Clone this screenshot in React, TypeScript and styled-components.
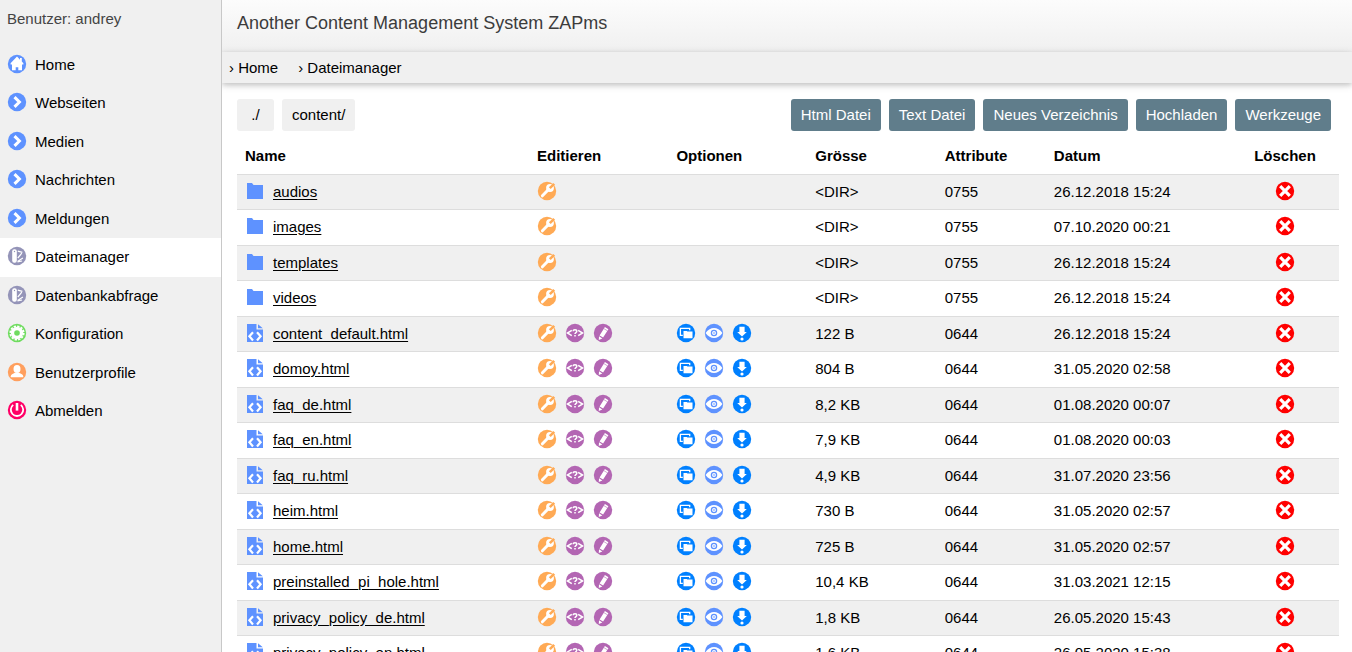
import React from "react";
import styled, { createGlobalStyle } from "styled-components";

const GlobalStyle = createGlobalStyle`
  *, *::before, *::after { box-sizing: border-box; }
  html { scrollbar-width: none; }
  body {
    margin: 0;
    background: #fff;
    color: #000;
    font-family: "Liberation Sans", Arial, sans-serif;
    font-size: 15px;
    line-height: 1.5;
  }
  a { color: inherit; }
  button { font: inherit; cursor: pointer; }
`;

const Page = styled.div`
  display: grid;
  grid-template-columns: 222px minmax(0, 1fr);
  min-height: 100vh;
`;

const Sidebar = styled.aside`
  position: relative;
  z-index: 1;
  background: #f0f0f0;
  border-right: 1px solid #c8c8c8;
`;

const UserLine = styled.div`
  padding: 8px 7px 15px;
  color: #444;
`;

const NavList = styled.ul`
  list-style: none;
  margin: 0;
  padding: 0;
`;

const NavLink = styled.a<{ $active?: boolean }>`
  display: flex;
  align-items: center;
  gap: 8px;
  padding: 8px 7px;
  text-decoration: none;
  background: ${(p) => (p.$active ? "#fff" : "transparent")};
`;

const Icon = styled.svg`
  display: block;
  flex: none;
  width: 20px;
  height: 20px;
  margin-bottom: 2px;
`;

const Content = styled.div`
  display: flex;
  flex-direction: column;
`;

const Header = styled.header`
  height: 52px;
  padding: 0 15px;
  background: linear-gradient(#fcfcfc, #f0f0f0);
`;

const Title = styled.h1`
  margin: 0;
  font-size: 18px;
  line-height: 46px;
  font-weight: 400;
  color: #3c3c3c;
`;

const Breadcrumb = styled.nav`
  display: flex;
  gap: 20px;
  padding: 4px 7px;
  line-height: 23px;
  background: #f0f0f0;
  box-shadow: 0 2px 5px rgba(0, 0, 0, 0.16), 0 2px 10px rgba(0, 0, 0, 0.12);

  a { text-decoration: none; }
`;

const Main = styled.main`
  padding: 16px 13px 16px 15px;
`;

const Toolbar = styled.div`
  display: flex;
  gap: 8px;
  padding-right: 8px;
  margin-bottom: 8px;
`;

const Spacer = styled.div`
  flex: 1;
`;

const ToolButton = styled.button<{ $primary?: boolean }>`
  min-width: 37px;
  height: 32px;
  padding: 0 10px;
  border: 0;
  border-radius: 3px;
  white-space: nowrap;
  color: ${(p) => (p.$primary ? "#fff" : "#000")};
  background: ${(p) => (p.$primary ? "#607d8b" : "#f0f0f0")};
`;

const Table = styled.table`
  width: 100%;
  table-layout: fixed;
  border-collapse: collapse;
  border-spacing: 0;

  th, td {
    padding: 6px 8px;
    text-align: left;
    vertical-align: middle;
    white-space: nowrap;
  }
  th:last-child, td:last-child { text-align: center; }
  tr { border-bottom: 1px solid #ddd; }
  tbody tr:nth-child(odd) { background: #f0f0f0; }
`;

const Col = styled.col<{ $width: string }>`
  width: ${(p) => p.$width};
`;

const NameCell = styled.div`
  display: flex;
  align-items: center;
  gap: 8px;
`;

const FileLink = styled.a`
  text-decoration: underline;
  text-underline-offset: 2px;
`;

const Actions = styled.div<{ $center?: boolean }>`
  display: flex;
  gap: 8px;
  justify-content: ${(p) => (p.$center ? "center" : "flex-start")};
`;

const IconButton = styled.button`
  display: block;
  padding: 0;
  border: 0;
  background: none;
`;

type IconName =
  | "home" | "chevron" | "knife" | "gear" | "user" | "power"
  | "wrench" | "code" | "pencil" | "copy" | "eye" | "download" | "remove";

const discs: Record<IconName, string> = {
  home: "#5e92ff",
  chevron: "#5e92ff",
  knife: "#9494b8",
  gear: "#6fdc5f",
  user: "#ff9f5e",
  power: "#ff0066",
  wrench: "#ffaa55",
  code: "#b366b3",
  pencil: "#b366b3",
  copy: "#0080ff",
  eye: "#5e92ff",
  download: "#0080ff",
  remove: "#ff0000",
};

const glyphs: Record<IconName, React.ReactNode> = {
  home: <path fill="#fff" d="M10 2.6 3.6 9.2v1.400H5V16.300h3.700v-3.100h2.600v3.100H15v-5.700h1.400V9.200l-1.600-1.600V4h-1.800v1.700z" />,
  chevron: <path fill="none" stroke="#fff" strokeWidth="3" d="m7.500 5.100 4.900 4.900-4.900 4.900" />,
  knife: (
    <>
      <rect x="5.200" y="3.200" width="4.600" height="13.600" rx="2" fill="#fff" />
      <circle cx="7.500" cy="5.500" r=".7" fill="#9494b8" />
      <path fill="none" stroke="#fff" strokeWidth="1.200" d="m10.800 5.200 4.600 1.200M14.800 7.200l-4 4.800M10.500 15.400l5.400-3.300M10.500 15.800l4.600-.8" />
    </>
  ),
  gear: (
    <>
      <circle cx="10" cy="10" r="6.200" fill="#fff" />
      <circle cx="10" cy="10" r="6.800" fill="none" stroke="#fff" strokeWidth="1.600" strokeDasharray="2.300 1.260" />
      <circle cx="10" cy="10" r="2.800" fill="#6fdc5f" />
    </>
  ),
  user: (
    <>
      <ellipse cx="10" cy="6.900" rx="3.500" ry="4" fill="#fff" />
      <path fill="#fff" d="M3.800 15.300v-1.100c0-1.500 2.200-2.500 4.200-3.400h4c2 .9 4.200 1.900 4.200 3.400v1.100z" />
    </>
  ),
  power: (
    <>
      <path fill="none" stroke="#fff" strokeWidth="1.800" d="M6.200 4.900a6.200 6.200 0 1 0 7.600 0" />
      <path stroke="#fff" strokeWidth="2.600" d="M10 3v7.600" />
    </>
  ),
  wrench: (
    <>
      <path stroke="#fff" strokeWidth="3" strokeLinecap="round" d="m5.400 14.800 6.100-6.300" />
      <circle cx="13" cy="7" r="3.900" fill="#fff" />
      <path stroke="#ffaa55" strokeWidth="2.600" d="m12.800 7.200 4.400-4.400" />
    </>
  ),
  code: (
    <>
      <path fill="none" stroke="#fff" strokeWidth="1.500" d="M6.800 7.400 2.400 10l4.400 2.600M13.200 7.400l4.400 2.600-4.400 2.600" />
      <path fill="none" stroke="#fff" strokeWidth="1.500" d="M8.200 8.300c0-2.200 3.600-2.200 3.600 0 0 1.300-1.800 1.400-1.800 2.700M10 12v1.500" />
    </>
  ),
  pencil: (
    <>
      <path fill="#fff" d="m11.900 4 3.500 2.200-5.300 8.400-3.500-2.200zM6 13.300l3.300 2.100-3.500 1.700z" />
      <path stroke="#b366b3" strokeWidth=".6" d="m10.900 5.600 3.500 2.200" />
    </>
  ),
  copy: (
    <>
      <path fill="none" stroke="#fff" strokeWidth="1.300" d="M6.800 12.300H4.400V5.400h9.300v1.900" />
      <path fill="#fff" d="M7.500 8h3.200l.7.500h5.100v6.800h-9z" />
    </>
  ),
  eye: (
    <>
      <path fill="#fff" d="M1.500 10C4 6.500 7 4.900 10 4.900s6 1.600 8.500 5.100c-2.500 3.500-5.500 5.100-8.500 5.100S4 13.500 1.500 10z" />
      <circle cx="10" cy="10" r="2.600" fill="#fff" stroke="#5e92ff" strokeWidth="1.300" />
      <circle cx="10" cy="10" r=".8" fill="#5e92ff" />
    </>
  ),
  download: (
    <>
      <path fill="#fff" d="M7.400 3.800h5.200V9h2.200L10 13.600 5.200 9h2.200z" />
      <circle cx="10" cy="16" r="1.600" fill="#fff" />
    </>
  ),
  remove: <path fill="none" stroke="#fff" strokeWidth="3.200" d="m5.200 5.200 9.600 9.600m0-9.600-9.600 9.600" />,
};

function Glyph({ name }: { name: IconName }) {
  return (
    <Icon viewBox="0 0 20 20" aria-hidden="true">
      <circle cx="10" cy="10" r="9.200" fill={discs[name]} />
      {glyphs[name]}
    </Icon>
  );
}

function Folder() {
  return (
    <Icon viewBox="0 0 20 20" aria-hidden="true">
      <path fill="#5e92ff" d="M2 2h5l1.500 2H18v14H2z" />
    </Icon>
  );
}

function HtmlFile() {
  return (
    <Icon viewBox="0 0 20 20" aria-hidden="true">
      <path fill="#5e92ff" d="M2 1h9.500v5.500H18V19H2zM13 1.200l4.800 4H13z" />
      <path fill="none" stroke="#fff" strokeWidth="2.200" d="m8 9.200-3.600 4.100L8 17.400M12 9.200l3.600 4.100-3.600 4.100" />
    </Icon>
  );
}

function Action({ name, label }: { name: IconName; label: string }) {
  return (
    <IconButton type="button" aria-label={label} title={label}>
      <Glyph name={name} />
    </IconButton>
  );
}

const navigation: { label: string; icon: IconName; active?: boolean }[] = [
  { label: "Home", icon: "home" },
  { label: "Webseiten", icon: "chevron" },
  { label: "Medien", icon: "chevron" },
  { label: "Nachrichten", icon: "chevron" },
  { label: "Meldungen", icon: "chevron" },
  { label: "Dateimanager", icon: "knife", active: true },
  { label: "Datenbankabfrage", icon: "knife" },
  { label: "Konfiguration", icon: "gear" },
  { label: "Benutzerprofile", icon: "user" },
  { label: "Abmelden", icon: "power" },
];

const paths = ["./", "content/"];
const tools = ["Html Datei", "Text Datei", "Neues Verzeichnis", "Hochladen", "Werkzeuge"];
const columns = [
  { label: "Name", width: "26.5%" },
  { label: "Editieren", width: "12.65%" },
  { label: "Optionen", width: "12.6%" },
  { label: "Grösse", width: "11.75%" },
  { label: "Attribute", width: "9.9%" },
  { label: "Datum", width: "16.8%" },
  { label: "Löschen", width: "9.8%" },
];

// name, size, attributes, date
const entries = [
  ["audios", "<DIR>", "0755", "26.12.2018 15:24"],
  ["images", "<DIR>", "0755", "07.10.2020 00:21"],
  ["templates", "<DIR>", "0755", "26.12.2018 15:24"],
  ["videos", "<DIR>", "0755", "26.12.2018 15:24"],
  ["content_default.html", "122 B", "0644", "26.12.2018 15:24"],
  ["domoy.html", "804 B", "0644", "31.05.2020 02:58"],
  ["faq_de.html", "8,2 KB", "0644", "01.08.2020 00:07"],
  ["faq_en.html", "7,9 KB", "0644", "01.08.2020 00:03"],
  ["faq_ru.html", "4,9 KB", "0644", "31.07.2020 23:56"],
  ["heim.html", "730 B", "0644", "31.05.2020 02:57"],
  ["home.html", "725 B", "0644", "31.05.2020 02:57"],
  ["preinstalled_pi_hole.html", "10,4 KB", "0644", "31.03.2021 12:15"],
  ["privacy_policy_de.html", "1,8 KB", "0644", "26.05.2020 15:43"],
  ["privacy_policy_en.html", "1,6 KB", "0644", "26.05.2020 15:38"],
];

export default function App() {
  return (
    <>
      <GlobalStyle />
      <Page>
        <Sidebar>
          <UserLine>Benutzer: andrey</UserLine>
          <nav>
            <NavList>
              {navigation.map((item) => (
                <li key={item.label}>
                  <NavLink href="#" $active={item.active}>
                    <Glyph name={item.icon} />
                    {item.label}
                  </NavLink>
                </li>
              ))}
            </NavList>
          </nav>
        </Sidebar>
        <Content>
          <Header>
            <Title>Another Content Management System ZAPms</Title>
          </Header>
          <Breadcrumb>
            <a href="#">› Home</a>
            <a href="#">› Dateimanager</a>
          </Breadcrumb>
          <Main>
            <Toolbar>
              {paths.map((path) => (
                <ToolButton key={path} type="button">{path}</ToolButton>
              ))}
              <Spacer />
              {tools.map((tool) => (
                <ToolButton key={tool} type="button" $primary>{tool}</ToolButton>
              ))}
            </Toolbar>
            <Table>
              <colgroup>
                {columns.map((c) => <Col key={c.label} $width={c.width} />)}
              </colgroup>
              <thead>
                <tr>
                  {columns.map((c) => <th key={c.label} scope="col">{c.label}</th>)}
                </tr>
              </thead>
              <tbody>
                {entries.map(([name, size, attributes, date]) => {
                  const isFile = size !== "<DIR>";
                  return (
                    <tr key={name}>
                      <td>
                        <NameCell>
                          {isFile ? <HtmlFile /> : <Folder />}
                          <FileLink href="#">{name}</FileLink>
                        </NameCell>
                      </td>
                      <td>
                        <Actions>
                          <Action name="wrench" label="Eigenschaften" />
                          {isFile && <Action name="code" label="Quelltext" />}
                          {isFile && <Action name="pencil" label="Bearbeiten" />}
                        </Actions>
                      </td>
                      <td>
                        {isFile && (
                          <Actions>
                            <Action name="copy" label="Kopieren" />
                            <Action name="eye" label="Ansehen" />
                            <Action name="download" label="Herunterladen" />
                          </Actions>
                        )}
                      </td>
                      <td>{size}</td>
                      <td>{attributes}</td>
                      <td>{date}</td>
                      <td>
                        <Actions $center>
                          <Action name="remove" label="Löschen" />
                        </Actions>
                      </td>
                    </tr>
                  );
                })}
              </tbody>
            </Table>
          </Main>
        </Content>
      </Page>
    </>
  );
}
